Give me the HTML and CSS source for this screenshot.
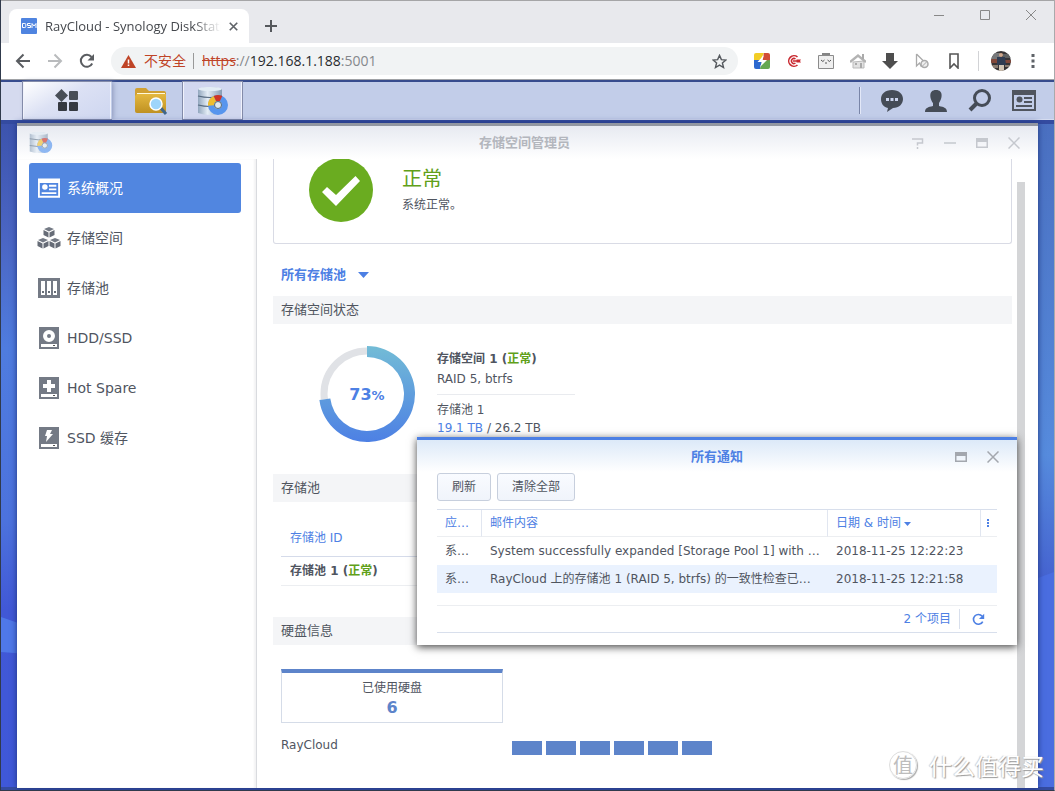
FILE: index.html
```html
<!DOCTYPE html>
<html lang="zh-CN">
<head>
<meta charset="utf-8">
<title>RayCloud - Synology DiskStation</title>
<link rel="stylesheet" href="styles.css">
</head>
<body>
<svg class="defs" aria-hidden="true">
  <defs>
    <linearGradient id="ring" x1="0" y1="0" x2="0" y2="1"><stop offset="0" stop-color="#73bcd6"/><stop offset="1" stop-color="#4d80e4"/></linearGradient>
    <linearGradient id="metal" x1="0" y1="0" x2="1" y2="0"><stop offset="0" stop-color="#91a6bd"/><stop offset=".4" stop-color="#e4edf6"/><stop offset="1" stop-color="#869bb2"/></linearGradient>
    <linearGradient id="gold" x1="0" y1="0" x2="0" y2="1"><stop offset="0" stop-color="#e4b83f"/><stop offset="1" stop-color="#bf9122"/></linearGradient>
    <linearGradient id="leftsky" x1="0" y1="0" x2="0" y2="1"><stop offset="0" stop-color="#3c53ad"/><stop offset=".18" stop-color="#4b66c4"/><stop offset=".34" stop-color="#4f7cdf"/><stop offset=".6" stop-color="#4c72dd"/><stop offset=".73" stop-color="#4158d6"/><stop offset="1" stop-color="#3f58d8"/></linearGradient>
    <linearGradient id="rightsky" x1="0" y1="0" x2="0" y2="1"><stop offset="0" stop-color="#4a6fc0"/><stop offset=".5" stop-color="#568bdd"/><stop offset=".7" stop-color="#4460cf"/><stop offset="1" stop-color="#4565db"/></linearGradient>
    <symbol id="storage" viewBox="0 0 32 30">
      <path d="M1 3q12-4 24 0v24q-12 4-24 0z" fill="url(#metal)"/>
      <ellipse cx="13" cy="3" rx="12" ry="2" fill="#e3edf5"/>
      <path d="M1 10q12 3 24 0M1 19q12 3 24 0" fill="none" stroke="#566a80" stroke-width="1.2"/>
      <circle cx="21" cy="19" r="7" fill="none" stroke="#5795ed" stroke-width="6"/>
      <path d="M14 19.500a7 7 0 0 1 4-6.800" fill="none" stroke="#efbd2e" stroke-width="6"/>
      <path d="M18 12.700a7 7 0 0 1 6 0" fill="none" stroke="#cf3526" stroke-width="6"/>
      <circle cx="21" cy="19" r="3.500" fill="#dfe8ef" stroke="#536b80"/>
    </symbol>
    <symbol id="panel" viewBox="0 0 24 21">
      <path d="M0 0h24v21H0zM2 5v14h20V5z" fill="currentColor" fill-rule="evenodd"/>
      <circle cx="7.500" cy="9.500" r="3" fill="currentColor"/>
      <path d="M12 7h8v2h-8zM12 11h8v2h-8zM4 15h16v2H4z" fill="currentColor"/>
    </symbol>
    <symbol id="close" viewBox="0 0 12 12"><path d="M.5.5l11 11M11.500.5l-11 11" stroke="currentColor" stroke-width="1.500" fill="none"/></symbol>
    <symbol id="max" viewBox="0 0 12 10"><path d="M0 0h12v10H0zM1.500 4v4.500h9V4z" fill="currentColor" fill-rule="evenodd"/></symbol>
    <symbol id="reload" viewBox="0 0 16 16"><path d="M13.200 10.500A6 6 0 1 1 12.500 4" stroke="currentColor" stroke-width="2" fill="none"/><path d="M15 1v6.500H8.500z" fill="currentColor"/></symbol>
  </defs>
</svg>
<div class="browser">
  <header class="tabstrip">
    <div class="tab">
      <svg class="favicon" viewBox="0 0 16 16"><rect width="16" height="16" rx="1" fill="#4f84e0"/><path d="M1.500 5.500h2.300q1 0 1 1v2q0 1-1 1H1.500zM9.500 5.500H6.500v2h3v2h-3M11 10V5.500l2 2.500 2-2.500V10" fill="none" stroke="#fff"/></svg>
      <span class="tab-title">RayCloud - Synology DiskStation</span>
      <button class="plain tab-close" aria-label="关闭标签页"><svg width="9" height="9" viewBox="0 0 12 12"><path d="M1 1l10 10M11 1L1 11" stroke="#5f6368" stroke-width="2.200"/></svg></button>
    </div>
    <button class="plain new-tab" aria-label="新标签页"><svg width="12" height="12" viewBox="0 0 12 12"><path d="M6 0v12M0 6h12" stroke="#55585c" stroke-width="2"/></svg></button>
    <div class="win-buttons">
      <button class="plain" aria-label="最小化"><svg width="10" height="10"><path d="M0 5.500h10" stroke="#888"/></svg></button>
      <button class="plain" aria-label="最大化"><svg width="10" height="10"><path d="M.5.5h9v9h-9z" fill="none" stroke="#888"/></svg></button>
      <button class="plain" aria-label="关闭"><svg width="10" height="10"><path d="M0 0l10 10M10 0L0 10" stroke="#888"/></svg></button>
    </div>
  </header>
  <div class="toolbar">
    <div class="nav">
      <button class="plain" aria-label="后退"><svg width="16" height="16"><path d="M15 8H2.500M8.500 1.500L2 8l6.500 6.500" fill="none" stroke="#5a5d61" stroke-width="2"/></svg></button>
      <button class="plain" aria-label="前进"><svg width="16" height="16"><path d="M1 8h12.500M7.500 1.500L14 8l-6.500 6.500" fill="none" stroke="#b9bbbd" stroke-width="2"/></svg></button>
      <button class="plain dark" aria-label="重新加载"><svg width="16" height="16"><use href="#reload"/></svg></button>
    </div>
    <div class="address">
      <svg width="15" height="13" viewBox="0 0 15 13"><path d="M7.500 0L15 13H0z" fill="#bf4427"/><path d="M7.500 4.500v4M7.500 9.500v1.500" stroke="#fff" stroke-width="1.500"/></svg>
      <span class="insecure">不安全</span>
      <span class="url"><s>https</s>://<b>192.168.1.188</b>:5001</span>
      <button class="plain star" aria-label="添加书签"><svg width="15" height="15" viewBox="0 0 16 16"><path d="M8 1.500l2 4.500 4.800.4-3.700 3.200 1.200 4.800L8 11.800l-4.300 2.600 1.200-4.800L1.200 6.400 6 6z" fill="none" stroke="#55595e" stroke-width="1.500"/></svg></button>
    </div>
    <div class="extensions">
      <svg width="16" height="16"><defs><clipPath id="tile"><rect width="16" height="16" rx="2"/></clipPath></defs><g clip-path="url(#tile)"><path d="M0 0h10L6 8H0z" fill="#f2cd25"/><path d="M10 0h6v9L8 8z" fill="#d14c36"/><path d="M0 7h8l-2 9H0z" fill="#2c68cf"/><path d="M8 8l8-1v9H6z" fill="#65a852"/><path d="M10 2L3.500 9H8l-2 5 7-7H8.500z" fill="#fff"/></g></svg>
      <svg width="16" height="16"><path d="M11.500 4A5.300 5.300 0 1 0 11.500 12" fill="none" stroke="#c92a31" stroke-width="1.600"/><path d="M9.500 6A2.500 2.500 0 1 0 9.500 10" fill="none" stroke="#c92a31" stroke-width="1.500"/><path d="M7 8h5" stroke="#c92a31" stroke-width="1.500"/><path d="M10.500 6.500H15L14 8l1 1.500h-4.500z" fill="#c92a31"/></svg>
      <svg width="16" height="16"><path d="M4 0h8v3H4z" fill="#858585"/><path d="M.5 2.500h15v13H.5z" fill="#efefef" stroke="#8b8b8b"/><path d="M3 7q2 3 3.500 0M9.500 7q2 3 3.500 0M7 10h2" fill="none" stroke="#555"/></svg>
      <svg width="16" height="16"><path d="M3 9v6h11V8z" fill="#e2e2e2" stroke="#bbb"/><path d="M0 9l8-6.500L16 9" fill="none" stroke="#b3b3b3" stroke-width="2.500"/><path d="M12 1h2v5h-2zM5 10h2v2H5zM10 10h2v5h-2z" fill="#aaa"/></svg>
      <svg width="16" height="16"><path d="M4 0h8v8h4l-8 8-8-8h4z" fill="#4e4e4e"/></svg>
      <svg width="16" height="16"><path d="M2.500 1v12l3-3 2 4M2.500 1l7 7" fill="none" stroke="#aaa" stroke-width="1.300"/><circle cx="10.500" cy="11" r="3.500" fill="#eee" stroke="#aaa" stroke-width="1.500"/><path d="M8 13.500l5-5" stroke="#aaa"/></svg>
      <svg width="16" height="16"><path d="M4 1h8v14l-4-4-4 4z" fill="none" stroke="#555" stroke-width="1.600"/></svg>
    </div>
    <div class="account">
      <svg width="20" height="20"><defs><clipPath id="av"><circle cx="10" cy="10" r="10"/></clipPath></defs><g clip-path="url(#av)"><path d="M0 0h20v20H0z" fill="#383435"/><path d="M0 2h9v6H0z" fill="#77787a"/><path d="M12 3h8v4h-8z" fill="#5e6061"/><path d="M0 8h7v4H0zM13 9h7v3h-7z" fill="#82483a"/><path d="M6 6h8l1 8H6z" fill="#303c52"/><circle cx="10" cy="4" r="2" fill="#d0a88d"/><path d="M8 14h5v6H8z" fill="#d3c5b4"/><path d="M0 14h7v3H0zM14 14h6v2h-6z" fill="#8b7d72"/></g></svg>
      <button class="plain" aria-label="菜单"><svg width="4" height="14"><path d="M.5 0h3v3h-3zM.5 5.500h3v3h-3zM.5 11h3v3h-3z" fill="#5f6368"/></svg></button>
    </div>
  </div>
  <nav class="taskbar">
    <div class="task-spacer"></div>
    <button class="task menu" aria-label="主菜单"><svg width="24" height="24"><path d="M6.500 0L13 6.500 6.500 13 0 6.500z" fill="#484e57"/><rect x="14" y="2" width="9" height="9" rx="1" fill="#484e57"/><rect x="3" y="13" width="9" height="9" rx="1" fill="#353941"/><rect x="14" y="13" width="9" height="9" rx="1" fill="#353941"/></svg></button>
    <button class="task files" aria-label="文件管理"><svg width="34" height="28"><path d="M1 3q0-2 2-2h9l3 3h15q2 0 2 2v18H1z" fill="#d0a032"/><path d="M3 6h28v4H3z" fill="#fff9db"/><path d="M1 9l2-2h29v17q0 2-2 2H3q-2 0-2-2z" fill="url(#gold)"/><path d="M26 20l6 7" stroke="#3f668b" stroke-width="3"/><circle cx="22" cy="17" r="6" fill="#9ed5fa" stroke="#fff" stroke-width="1.500"/></svg></button>
    <button class="task active" aria-label="存储空间管理员"><svg width="32" height="30"><use href="#storage"/></svg></button>
    <div class="tray">
      <button class="plain" aria-label="通知"><svg width="24" height="24"><path d="M12 1c7 0 11 4 11 9s-4 9-10 9l-6 4 1-4C3 18 1 14 1 10c0-5 4-9 11-9z" fill="#454c57"/><path d="M6 9h3v3H6zM10.500 9h3v3h-3zM15 9h3v3h-3z" fill="#ccd5ef"/></svg></button>
      <button class="plain" aria-label="选项"><svg width="24" height="24"><path d="M12 1c8 0 6 9 3 13v3c5 1 8 2 8 6H1c0-4 3-5 8-6v-3C6 10 4 1 12 1z" fill="#454c57"/></svg></button>
      <button class="plain" aria-label="搜索"><svg width="24" height="24"><circle cx="14" cy="9" r="7.500" fill="none" stroke="#454c57" stroke-width="3"/><path d="M9 14l-7 7" stroke="#454c57" stroke-width="4"/></svg></button>
      <button class="plain" aria-label="小工具"><svg width="24" height="21"><use href="#panel"/></svg></button>
    </div>
  </nav>
  <main class="desktop">
    <svg class="wallpaper" viewBox="0 0 1053 670" preserveAspectRatio="none"><path d="M0 0h526v670H0z" fill="url(#leftsky)"/><path d="M526 0h527v670H526z" fill="url(#rightsky)"/><path d="M0 497l40 14v24L0 532z" fill="#4f78e8"/><path d="M1000 472l53-20v218h-53z" fill="#4a6de0"/><path d="M0 0h1053v4H0zM0 667h1053v3H0z" fill="#344ba0"/></svg>
    <section class="dsm-window">
      <header class="window-head">
        <svg class="app-icon" width="24" height="23"><use href="#storage"/></svg>
        <h1>存储空间管理员</h1>
        <div class="window-tools">
          <button class="plain" aria-label="帮助"><svg width="12" height="12"><path d="M0 2h10.500v4H5.500v2.500M5.500 10v2" fill="none" stroke="currentColor" stroke-width="1.500"/></svg></button>
          <button class="plain" aria-label="最小化"><svg width="12" height="12"><path d="M0 6h12" stroke="currentColor" stroke-width="1.500"/></svg></button>
          <button class="plain" aria-label="最大化"><svg width="12" height="10"><use href="#max"/></svg></button>
          <button class="plain" aria-label="关闭"><svg width="12" height="12"><use href="#close"/></svg></button>
        </div>
      </header>
      <div class="window-body">
        <nav class="side">
          <a class="side-item selected" href="#"><svg width="24" height="24"><use href="#panel" x="1" y="2" width="22" height="20"/></svg>系统概况</a>
          <a class="side-item" href="#"><svg width="24" height="24"><g id="cube" fill="#747a85"><path d="M12 1l5 2-5 2.500L7 3z"/><path d="M6.500 4l5 2.500v5l-5-2.500zM17.500 4l-5 2.500v5l5-2.500z" fill="#666c77"/></g><use href="#cube" x="-6" y="11"/><use href="#cube" x="6" y="11"/></svg>存储空间</a>
          <a class="side-item" href="#"><svg width="24" height="24"><path d="M1 2h22v20H1z" fill="#747a85"/><path d="M4 5h4v14H4zM10 5h4v14h-4zM16 5h4v14h-4z" fill="#fff"/><path d="M5 15h2v2H5zM11 15h2v2h-2zM17 15h2v2h-2z" fill="#676d77"/></svg>存储池</a>
          <a class="side-item" href="#"><svg width="24" height="24"><path d="M2 1h20v22H2z" fill="#747a85"/><circle cx="12" cy="10" r="4" fill="none" stroke="#fff" stroke-width="4"/><path d="M4 18h16v3H4z" fill="#fff"/><path d="M16 19h2v1h-2z" fill="#555"/></svg>HDD/SSD</a>
          <a class="side-item" href="#"><svg width="24" height="24"><path d="M2 1h20v22H2z" fill="#747a85"/><path d="M10 4h4v4h4v4h-4v4h-4v-4H6V8h4zM4 18h16v3H4z" fill="#fff"/><path d="M16 19h2v1h-2z" fill="#555"/></svg>Hot Spare</a>
          <a class="side-item" href="#"><svg width="24" height="24"><path d="M2 1h20v22H2z" fill="#747a85"/><path d="M10 4h5l-2 4h3l-7 8 1-6H8zM4 18h16v3H4z" fill="#fff"/><path d="M16 19h2v1h-2z" fill="#555"/></svg>SSD 缓存</a>
        </nav>
        <div class="content">
          <section class="health">
            <svg width="64" height="64"><circle cx="32" cy="32" r="32" fill="#6aac20"/><path d="M13 34l5-5 9 8L46.500 18l4.500 5L27 48z" fill="#fff"/></svg>
            <div><h2>正常</h2><p>系统正常。</p></div>
          </section>
          <button class="plain pool-filter">所有存储池<svg width="11" height="6"><path d="M0 0h11L5.500 6z" fill="#4d80e4"/></svg></button>
          <h3 class="bar">存储空间状态</h3>
          <section class="volume">
            <div class="donut">
              <svg width="98" height="98" viewBox="0 0 98 98"><circle cx="49" cy="49" r="43" fill="none" stroke="#e0e2e6" stroke-width="7"/><path d="M49 6.500a42.500 42.500 0 1 1-42.200 47.800" fill="none" stroke="#fff" stroke-width="13"/><path d="M49 1a48 48 0 1 1-47.600 54l10.900-1.400A37 37 0 1 0 49 12z" fill="url(#ring)"/></svg>
              <strong>73<small>%</small></strong>
            </div>
            <div class="volume-info">
              <p><strong>存储空间 1 (<span class="ok">正常</span>)</strong></p>
              <p>RAID 5, btrfs</p>
              <hr>
              <p>存储池 1</p>
              <p class="usage"><span class="blue">19.1 TB</span> / 26.2 TB</p>
            </div>
          </section>
          <h3 class="bar">存储池</h3>
          <table class="pools">
            <thead><tr><th>存储池 ID</th></tr></thead>
            <tbody><tr><td>存储池 1 (<span class="ok">正常</span>)</td></tr></tbody>
          </table>
          <h3 class="bar">硬盘信息</h3>
          <div class="disk-count"><span>已使用硬盘</span><strong>6</strong></div>
          <div class="disk-row"><span>RayCloud</span><div class="disks"><i></i><i></i><i></i><i></i><i></i><i></i></div></div>
        </div>
        <div class="scroll"><div class="thumb"></div></div>
      </div>
    </section>
  </main>
  <section class="dialog" role="dialog" aria-label="所有通知">
    <header class="dialog-head">
      <h2>所有通知</h2>
      <div class="dialog-tools">
        <button class="plain" aria-label="最大化"><svg width="12" height="10"><use href="#max"/></svg></button>
        <button class="plain" aria-label="关闭"><svg width="12" height="12"><use href="#close"/></svg></button>
      </div>
    </header>
    <div class="actions"><button>刷新</button><button>清除全部</button></div>
    <table class="notices">
      <colgroup><col class="c-app"><col><col class="c-time"><col class="c-more"></colgroup>
      <thead><tr><th>应用程序</th><th>邮件内容</th><th>日期 &amp; 时间<svg width="7" height="4"><path d="M0 0h7L3.500 4z" fill="#4d80e4"/></svg></th><th><svg width="3" height="9"><path d="M0 0h2v2H0zM0 3h2v2H0zM0 6h2v2H0z" fill="#4d80e4"/></svg></th></tr></thead>
      <tbody>
        <tr><td>系统信息</td><td>System successfully expanded [Storage Pool 1] with additional drives</td><td class="time" colspan="2">2018-11-25 12:22:23</td></tr>
        <tr class="alt"><td>系统信息</td><td>RayCloud 上的存储池 1 (RAID 5, btrfs) 的一致性检查已完成</td><td class="time" colspan="2">2018-11-25 12:21:58</td></tr>
      </tbody>
    </table>
    <footer><span>2 个项目</span><button class="plain" aria-label="刷新列表"><svg width="13" height="13"><use href="#reload"/></svg></button></footer>
  </section>
  <div class="watermark"><span class="seal">值</span><span>什么值得买</span></div>
</div>
</body>
</html>
```
FILE: styles.css
```css
* { box-sizing: border-box; }
body { margin: 0; color: #50555f; font: 12px/20px "DejaVu Sans", "Noto Sans CJK SC", sans-serif; }
h1, h2, h3, p { margin: 0; font-weight: normal; }
svg { display: block; flex: none; }
a { color: inherit; text-decoration: none; }
.defs { position: absolute; width: 0; height: 0; }
.plain { display: flex; align-items: center; justify-content: center; padding: 0; border: 0; background: none; color: inherit; font: inherit; }
.browser { position: relative; display: flex; flex-direction: column; height: 100vh; overflow: hidden; border-left: 1px solid #303a4c; border-right: 1px solid #a9a9ab; border-bottom: 1px solid #303a4c; }

.tabstrip { display: flex; flex: none; align-items: flex-end; height: 43px; padding-left: 8px; border-top: 1px solid #a5a5a7; background: #e8e9ed; font: 13px/20px "Open Sans", "Noto Sans CJK SC", sans-serif; }
.tab { display: flex; align-items: center; gap: 8px; width: 240px; height: 34px; padding: 0 11px 0 12px; border-radius: 8px 8px 0 0; background: #fff; }
.favicon { width: 16px; height: 16px; }
.tab-title { flex: 1; overflow: hidden; white-space: nowrap; color: #45484d; -webkit-mask-image: linear-gradient(90deg, #000 84%, transparent); mask-image: linear-gradient(90deg, #000 84%, transparent); }
.new-tab { align-self: center; margin: 8px 0 0 16px; }
.win-buttons { display: flex; align-self: flex-start; gap: 36px; margin: 9px 18px 0 auto; }
.toolbar { display: flex; flex: none; align-items: center; gap: 16px; height: 37px; padding: 0 19px 0 14px; border-bottom: 1px solid #a0a2a6; background: #fff; }
.nav { display: flex; gap: 16px; }
.dark { color: #5a5d61; }
.address { display: flex; flex: 1; align-items: center; height: 28px; padding: 0 11px 0 10px; border-radius: 14px; background: #f1f3f4; color: #85888c; font: 14px/20px "Open Sans", "Noto Sans CJK SC", sans-serif; }
.insecure { margin: 0 8px; padding-right: 7px; border-right: 1px solid #999; color: #bf4427; line-height: 16px; }
.url s { color: #bf4427; }
.url b { color: #292b2f; font-weight: normal; }
.star { margin-left: auto; }
.extensions { display: flex; gap: 16px; }
.account { display: flex; align-items: center; gap: 20px; padding-left: 12px; border-left: 1px solid #d2d3d6; }

.taskbar { display: flex; flex: none; height: 40px; border-top: 2px solid #374c8e; border-bottom: 1px solid #d5dcf0; background: #c2cde9; }
.task-spacer { width: 22px; background: #d5daef; }
.task { display: flex; align-items: center; justify-content: center; padding: 0; border: 1px solid #f0f2fc; border-width: 0 1px; background: none; }
.menu { width: 88px; outline: 1px solid #838ba9; background: linear-gradient(150deg, #fff, #dce1f4 45%, #ced6f0); box-shadow: 2px 0 5px #8a94b8; }
.files { width: 72px; padding-left: 8px; border-color: #c2cde9; }
.active { width: 59px; outline: 1px solid #838ba9; background: #d1d7ef; }
.tray { display: flex; align-items: center; gap: 20px; margin: 5px 18px 5px auto; padding-left: 20px; border-left: 1px solid #7985a8; box-shadow: inset 1px 0 #e3e8f8; }

.desktop { position: relative; display: flex; flex: 1; min-height: 0; padding: 3px 16px 2px; background: #344ba7; }
.wallpaper { position: absolute; inset: 0; width: 100%; height: 100%; }
.dsm-window { position: relative; display: flex; flex: 1; flex-direction: column; min-width: 0; border-top: 3px solid #9297a2; background: #fff; box-shadow: 0 0 6px #1e347b; }
.window-head { display: grid; grid-template-columns: 1fr auto 1fr; flex: none; align-items: center; height: 33px; padding: 0 18px 0 12px; background: linear-gradient(#e7eaf1, #fff); }
.window-head h1 { color: #b3b6bd; font-size: 13px; font-weight: bold; }
.app-icon { opacity: .65; }
.window-tools { display: flex; justify-content: flex-end; gap: 20px; color: #c5c8ce; }
.window-body { display: flex; flex: 1; min-height: 0; }
.side { display: flex; flex: none; flex-direction: column; width: 240px; padding: 4px 15px 0 12px; border-right: 1px solid #d9dbdf; box-shadow: inset -2px 0 2px #f3f3f4; }
.side-item { display: flex; flex: none; align-items: center; gap: 6px; height: 50px; padding-left: 8px; border-radius: 3px; font-size: 14px; }
.selected { background: #5186e0; color: #fff; }
.content { flex: 1; min-width: 0; padding: 0 5px 0 16px; overflow: hidden; }
.health { display: flex; gap: 29px; height: 85px; padding-left: 35px; border: 1px solid #d9dbe5; border-top: 0; border-radius: 0 0 3px 3px; }
.health svg { margin-top: -1px; }
.health h2 { margin-top: 6px; color: #60a019; font-size: 20px; line-height: 28px; }
.health p { margin-top: 2px; }
.pool-filter { gap: 12px; height: 28px; margin: 17px 0 7px 8px; color: #4d80e4; font-size: 13px; font-weight: bold; }
.bar { height: 28px; padding-left: 8px; background: #f4f5f7; font-size: 13px; line-height: 28px; }
.volume { display: flex; gap: 21px; height: 150px; padding: 21px 0 0 45px; }
.donut { position: relative; width: 98px; height: 98px; }
.donut strong { position: absolute; inset: 0; display: flex; align-items: baseline; justify-content: center; color: #4d80e4; font-size: 16px; line-height: 100px; }
.donut small { font-size: 13px; }
.volume-info { padding-top: 4px; }
.volume-info hr { width: 138px; margin: 5px 0; border: 0; border-top: 1px solid #e9ebef; }
.volume-info .usage { line-height: 16px; }
.ok { color: #60a019; }
.blue { color: #4d80e4; }
.pools { width: calc(100% - 16px); margin: 18px 8px 31px; border-collapse: collapse; }
.pools th, .pools td { height: 29px; padding: 0 9px; border-bottom: 1px solid #eceef1; text-align: left; }
.pools th { height: 36px; border-color: #d5dbea; color: #4d80e4; font-weight: normal; }
.pools td { font-weight: bold; }
.disk-count { display: flex; flex-direction: column; align-items: center; width: 222px; height: 54px; margin: 24px 8px 12px; padding-top: 5px; border: 1px solid #d5dce8; border-top: 4px solid #5d84ca; }
.disk-count strong { color: #5d84ca; font-size: 16px; }
.disk-row { display: flex; align-items: center; margin-left: 8px; }
.disk-row > span { width: 231px; }
.disks { display: flex; gap: 4px; padding-top: 6px; }
.disks i { width: 30px; height: 14px; background: #5d84ca; }
.scroll { flex: none; width: 21px; padding-top: 23px; }
.thumb { width: 8px; height: 100%; background: #d4d5d7; }

.dialog { position: absolute; top: 437px; left: 416px; display: flex; flex-direction: column; width: 600px; padding: 0 20px 12px; border-top: 3px solid #4d80e4; background: linear-gradient(#dce9f8, #fff 32px); box-shadow: 0 2px 8px #444; }
.dialog-head { display: flex; align-items: center; justify-content: center; height: 33px; }
.dialog-head h2 { color: #4d80e4; font-size: 13px; font-weight: bold; }
.dialog-tools { position: absolute; right: 18px; display: flex; gap: 20px; color: #a3a7ae; }
.actions { display: flex; gap: 6px; }
.actions button { height: 28px; padding: 0 14px; border: 1px solid #c7cfdd; border-radius: 3px; background: linear-gradient(#f9fbff, #f0f4fb); color: #50555f; font: inherit; }
.notices { width: 100%; margin: 8px 0 12px; border-top: 1px solid #d8dfec; border-collapse: separate; border-spacing: 0; table-layout: fixed; }
.notices th, .notices td { height: 28px; padding: 0 8px; overflow: hidden; text-overflow: ellipsis; white-space: nowrap; text-align: left; }
.notices th { height: 27px; border-right: 1px solid #e1e6f0; border-bottom: 1px solid #eceef1; color: #4d80e4; font-weight: normal; }
.notices th:last-child { padding: 0 6px; border-right: 0; }
.notices th svg { display: inline-block; margin-left: 3px; vertical-align: middle; }
.notices th:last-child svg { margin: 0; }
.alt { background: #eaf2fe; }
.c-app { width: 45px; }
.c-time { width: 153px; }
.c-more { width: 16px; }
.dialog footer { display: flex; align-items: center; justify-content: flex-end; gap: 8px; height: 28px; border-top: 1px solid #eceef1; border-bottom: 1px solid #d8dfec; color: #4d80e4; }
.dialog footer button { height: 20px; padding: 0 12px; border-left: 1px solid #d8dfec; }
.watermark { position: absolute; right: 10px; bottom: 9px; display: flex; align-items: center; gap: 12px; color: #fff; font: 23px/32px "Noto Sans CJK SC", sans-serif; text-shadow: 1px 1px 1px #999, -1px 0 1px #ccc; }
.seal { width: 28px; height: 28px; border: 1px solid #ddd; border-radius: 50%; box-shadow: 1px 1px 1px #aaa; color: #bdbdbd; font-size: 20px; line-height: 26px; text-align: center; text-shadow: none; }
```
